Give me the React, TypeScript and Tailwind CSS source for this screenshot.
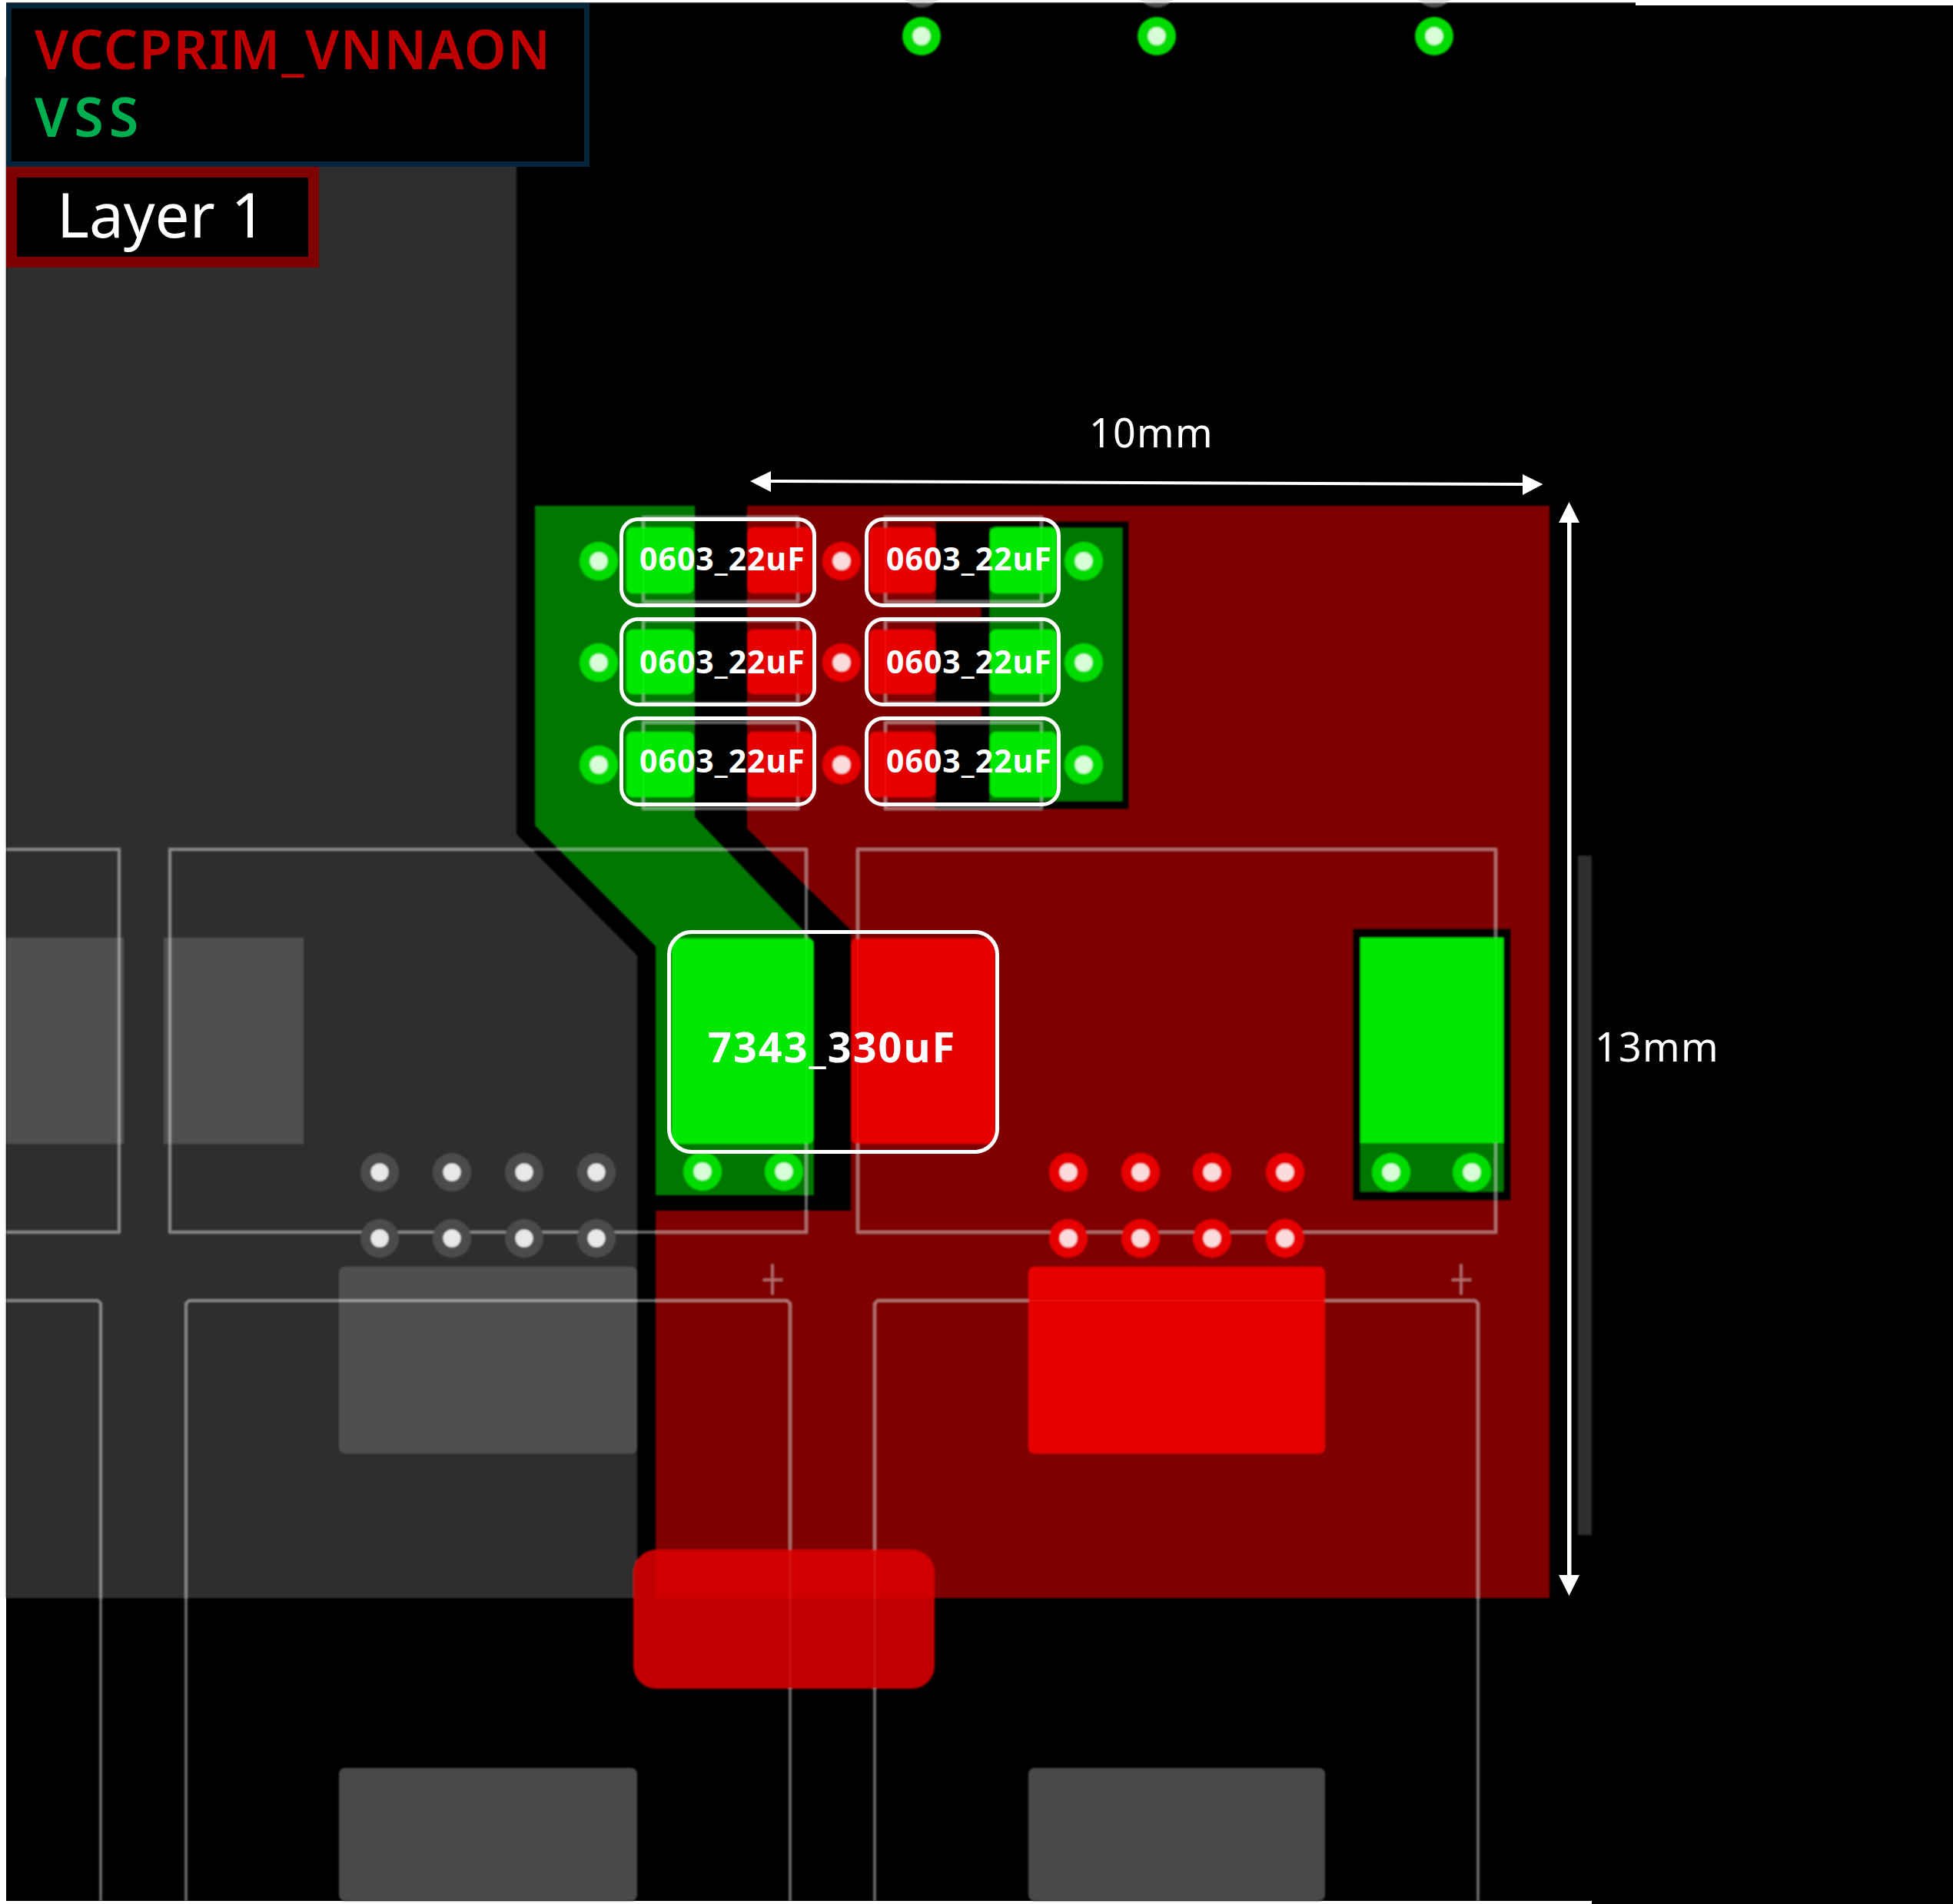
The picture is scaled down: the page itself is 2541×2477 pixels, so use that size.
const font = { fontFamily: '"Noto Sans", "Open Sans", sans-serif' };

const rowsY = [730, 862, 995];
const padRows: [number, number][] = [
  [686, 772],
  [819, 903],
  [952, 1037],
];
const silkRows: [number, number][] = [
  [673, 783],
  [807, 915],
  [940, 1052],
];

type Via = [number, number, 'g' | 'r' | 'k'];
const vias: Via[] = [
  [1199, 47, 'g'],
  [1505, 47, 'g'],
  [1866, 47, 'g'],
  ...rowsY.flatMap((y): Via[] => [
    [779, y, 'g'],
    [1095, y, 'r'],
    [1410, y, 'g'],
  ]),
  [914, 1524, 'g'],
  [1020, 1524, 'g'],
  [1810, 1525, 'g'],
  [1915, 1525, 'g'],
  ...[494, 588, 682, 776].flatMap((x): Via[] => [
    [x, 1525, 'k'],
    [x, 1611, 'k'],
  ]),
  ...[1390, 1484, 1577, 1672].flatMap((x): Via[] => [
    [x, 1525, 'r'],
    [x, 1611, 'r'],
  ]),
];
const viaColor = {
  g: ['#00dc00', '#d8fbd8'],
  r: ['#e60000', '#fbdcdc'],
  k: ['#4c4c4c', '#e8e8e8'],
};

function Board() {
  return (
    <svg width="2541" height="2477" viewBox="0 0 2541 2477" className="absolute inset-0">
      <defs>
        <filter id="soft" x="-1%" y="-1%" width="102%" height="102%">
          <feGaussianBlur stdDeviation="0.9" />
        </filter>
      </defs>
      <polygon points="8,3 2128,3 2128,7 2541,7 2541,2477 2071,2477 2071,2473 8,2473" fill="#000" />
      <g filter="url(#soft)">
        <polygon points="8,100 672,100 672,1085 829,1243 829,2079 8,2079" fill="#2d2d2d" />
        <rect x="2053" y="1113" width="18" height="884" fill="#2d2d2d" />
        <polygon points="972,658 2016,658 2016,2079 853,2079 853,1575 1107,1575 1107,1210 972,1078" fill="#7e0000" />
        <polygon points="696,658 904,658 904,1063 1059,1225 1059,1555 853,1555 853,1231 696,1074" fill="#007800" />
        <rect x="1276" y="678" width="193" height="375" fill="#000" />
        <rect x="1217" y="678" width="71" height="112" fill="#000" />
        <rect x="1217" y="808" width="71" height="107" fill="#000" />
        <rect x="1217" y="935" width="71" height="118" fill="#000" />
        <rect x="1288" y="687" width="172" height="355" fill="#007800" />
        <rect x="1760" y="1208" width="206" height="354" fill="#000" />
        <rect x="1770" y="1220" width="186" height="330" fill="#007800" />

        <g fill="#505050">
          <rect x="8" y="1220" width="153" height="268" />
          <rect x="213" y="1220" width="182" height="268" />
          <rect x="441" y="1648" width="388" height="243" rx="8" />
        </g>
        <g fill="#494949">
          <rect x="441" y="2300" width="388" height="173" rx="8" />
          <rect x="1338" y="2300" width="386" height="173" rx="8" />
        </g>

        <g fill="none" stroke="#fff" strokeOpacity="0.45" strokeWidth="3.5">
          <path d="M8 1105H155V1603H8" />
          <rect x="221" y="1105" width="828" height="498" />
          <rect x="1116" y="1105" width="830" height="498" />
          <path d="M8 1692H127L131 1696V2473" />
          <path d="M242 2473V1696L246 1692H1024L1028 1696V2473" />
          <path d="M1138 2473V1696L1142 1692H1919L1923 1696V2473" />
          <path d="M1005 1645V1684M993 1665H1018M1901 1645V1684M1889 1665H1914" strokeWidth="3" />
          {silkRows.map(([a, b]) => (
            <g key={a}>
              <rect x="837" y={a} width="201" height={b - a} />
              <rect x="1152" y={a} width="203" height={b - a} />
            </g>
          ))}
        </g>

        <g fillOpacity="0.93">
          <rect x="874" y="1221" width="185" height="267" rx="8" fill="#00f000" />
          <rect x="1107" y="1221" width="188" height="267" rx="8" fill="#ee0000" />
          <rect x="1770" y="1220" width="186" height="267" fill="#00f000" />
          <rect x="1338" y="1648" width="386" height="243" rx="8" fill="#ee0000" />
          {padRows.map(([a, b]) => (
            <g key={a}>
              <rect x="815" y={a} width="88" height={b - a} rx="8" fill="#00f000" />
              <rect x="972" y={a} width="85" height={b - a} rx="8" fill="#ee0000" />
              <rect x="1131" y={a} width="86" height={b - a} rx="8" fill="#ee0000" />
              <rect x="1288" y={a} width="87" height={b - a} rx="8" fill="#00f000" />
            </g>
          ))}
        </g>

        {[1199, 1505, 1866].map((x) => (
          <circle key={x} cx={x} cy="-15" r="25" fill="#4c4c4c" />
        ))}
        <rect x="0" y="0" width="2541" height="3" fill="#fff" />
        {vias.map(([x, y, c]) => (
          <g key={`${x}-${y}`}>
            <circle cx={x} cy={y} r="25" fill={viaColor[c][0]} />
            <circle cx={x} cy={y} r="11.5" fill={viaColor[c][1]} />
          </g>
        ))}
        <rect x="824" y="2016" width="392" height="181" rx="30" fill="#dd0000" fillOpacity="0.865" />
      </g>

      <g fill="#fff">
        <path d="M1003 624L1981 628V632L1003 628Z" />
        <polygon points="976,626 1003,613 1003,640" />
        <polygon points="2007.5,630 1981,617 1981,644" />
        <rect x="2039" y="680" width="5.5" height="1370" />
        <polygon points="2041.5,653 2028,680 2055,680" />
        <polygon points="2041.5,2076 2028,2049 2055,2049" />
      </g>
    </svg>
  );
}

function Cap({ className }: { className: string }) {
  return (
    <div className={`flex items-center rounded-[24px] border-[5px] border-white ${className}`}>
      <span className="whitespace-nowrap text-[41px] leading-none font-bold tracking-[1px] text-white">
        0603_22uF
      </span>
    </div>
  );
}

export default function App() {
  return (
    <div className="relative h-[2477px] w-[2541px] overflow-hidden bg-white" style={font}>
      <Board />

      {/* legend stack, top-left over the board */}
      <div className="absolute left-[8px] top-[4px] flex flex-col items-start">
        <div className="flex h-[213px] w-[759px] flex-col gap-[18px] border-[7px] border-[#05263a] bg-black pl-[30px] pt-[17px]">
          <span className="whitespace-nowrap text-[70px] leading-none font-semibold tracking-[1.5px] text-[#c00000]">
            VCCPRIM_VNNAON
          </span>
          <span className="whitespace-nowrap text-[70px] leading-none font-semibold tracking-[7px] text-[#00b050]">
            VSS
          </span>
        </div>
        <div className="flex h-[131px] w-[407px] items-start border-[14px] border-[#7f0000] bg-black pl-[52px] pt-[7px]">
          <span className="whitespace-nowrap text-[80px] leading-none text-white">Layer 1</span>
        </div>
      </div>

      {/* dimension annotations */}
      <span className="absolute left-[1417px] top-[536px] whitespace-nowrap text-[52px] leading-none tracking-[1.3px] text-white">
        10mm
      </span>
      <span className="absolute left-[2075px] top-[1335px] whitespace-nowrap text-[52px] leading-none tracking-[1.3px] text-white">
        13mm
      </span>

      {/* 0603 capacitor call-outs */}
      <div className="absolute left-[806px] top-[673px] grid grid-cols-[256px_255px] grid-rows-[117px_116px_117px] gap-x-[63px] gap-y-[13px]">
        <Cap className="pb-[11px] pl-[21px]" />
        <Cap className="pb-[11px] pl-[23px]" />
        <Cap className="pb-[2px] pl-[21px]" />
        <Cap className="pb-[2px] pl-[23px]" />
        <Cap className="pb-[3px] pl-[21px]" />
        <Cap className="pb-[3px] pl-[23px]" />
      </div>

      {/* 7343 capacitor call-out */}
      <div className="absolute left-[868px] top-[1210px] flex h-[291px] w-[432px] items-center rounded-[32px] border-[5px] border-white pl-[48px] pt-[10px]">
        <span className="whitespace-nowrap text-[54px] leading-none font-bold tracking-[2px] text-white">
          7343_330uF
        </span>
      </div>
    </div>
  );
}
